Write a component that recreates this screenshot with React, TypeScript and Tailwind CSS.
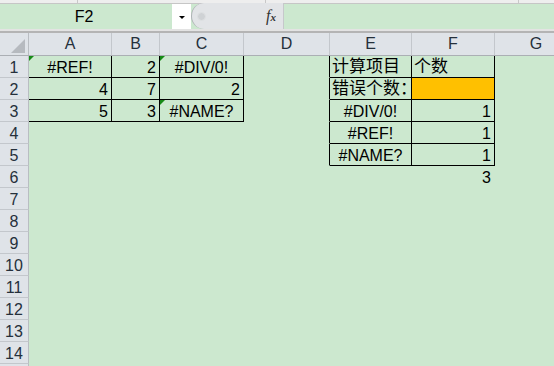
import React from "react";

type Align = "l" | "c" | "r";
type CellDef = { t?: string; a?: Align; tri?: boolean; cjk?: boolean; bg?: string; br?: boolean; bb?: boolean };

const widths = ["w-[83px]", "w-[48px]", "w-[84px]", "w-[86px]", "w-[82px]", "w-[83px]", "w-[83px]"];
const letters = ["A", "B", "C", "D", "E", "F", "G"];

const rows: CellDef[][] = [
  [
    { t: "#REF!", a: "c", tri: true, br: true, bb: true },
    { t: "2", a: "r", br: true, bb: true },
    { t: "#DIV/0!", a: "c", tri: true, br: true, bb: true },
    { br: true },
    { t: "计算项目", a: "l", cjk: true, br: true, bb: true },
    { t: "个数", a: "l", cjk: true, br: true, bb: true },
    {},
  ],
  [
    { t: "4", a: "r", br: true, bb: true },
    { t: "7", a: "r", br: true, bb: true },
    { t: "2", a: "r", br: true, bb: true },
    { br: true },
    { t: "错误个数：", a: "l", cjk: true, br: true, bb: true },
    { bg: "orange", br: true, bb: true },
    {},
  ],
  [
    { t: "5", a: "r", br: true, bb: true },
    { t: "3", a: "r", br: true, bb: true },
    { t: "#NAME?", a: "c", tri: true, br: true, bb: true },
    { br: true },
    { t: "#DIV/0!", a: "c", br: true, bb: true },
    { t: "1", a: "r", br: true, bb: true },
    {},
  ],
  [
    {}, {}, {}, { br: true },
    { t: "#REF!", a: "c", br: true, bb: true },
    { t: "1", a: "r", br: true, bb: true },
    {},
  ],
  [
    {}, {}, {}, { br: true },
    { t: "#NAME?", a: "c", br: true, bb: true },
    { t: "1", a: "r", br: true, bb: true },
    {},
  ],
  [{}, {}, {}, {}, {}, { t: "3", a: "r" }, {}],
];

function Cell({ c, w }: { c: CellDef; w: string }) {
  const just = c.a === "c" ? "justify-center" : c.a === "r" ? "justify-end pr-[3px]" : "justify-start pl-[2px]";
  const align = c.cjk ? "items-center leading-[21px] text-[17px]" : "items-end leading-[19px] text-[16px]";
  return (
    <div
      className={`relative flex shrink-0 h-[22px] box-border border-r border-b whitespace-nowrap overflow-visible ${w} ${just} ${align} ${
        c.br ? "border-r-black" : "border-r-transparent"
      } ${c.bb ? "border-b-black" : "border-b-transparent"} ${c.bg === "orange" ? "bg-[#ffc000]" : ""}`}
    >
      {c.tri && (
        <div className="absolute left-0 top-0 w-[5px] h-[5px] bg-[#178a17] [clip-path:polygon(0_0,100%_0,0_100%)]" />
      )}
      {c.t && <span>{c.t}</span>}
    </div>
  );
}

export default function App() {
  const allRows: CellDef[][] = [];
  for (let i = 0; i < 15; i++) allRows.push(rows[i] ?? [{}, {}, {}, {}, {}, {}, {}]);

  return (
    <div className="w-[554px] h-[366px] overflow-hidden bg-[#cce8cf] text-black font-['Liberation_Sans','Noto_Sans_CJK_SC',sans-serif]">
      {/* top band */}
      <div className="flex h-[4px] bg-[#eeeeee] border-b border-[#c6c6c6]">
        <div className="w-[78px] border-r border-[#c8c8c8]" />
        <div className="w-[188px] border-r border-[#c8c8c8]" />
        <div className="w-[253px] border-r border-[#c8c8c8]" />
      </div>
      {/* formula bar */}
      <div className="flex h-[25px]">
        <div className="w-[172px] flex items-center justify-center pr-[4px] text-[16px] leading-none pt-[1px]">F2</div>
        <div className="w-[19px] bg-white flex items-center justify-center">
          <div className="w-0 h-0 border-l-[3px] border-r-[3px] border-t-[3px] border-l-transparent border-r-transparent border-t-black mt-[2px]" />
        </div>
        <div className="relative w-[93px] -mt-[1px] h-[26px] bg-[#e2e4e7] border-l border-[#aeb1b5] border-r border-r-[#c6c8cb] rounded-l-[16px] flex items-center">
          <div className="ml-[5px] w-[9px] h-[9px] rounded-full bg-[#cfd2d5] border border-[#dfe1e3]" />
          <div className="ml-auto mr-[7px] font-['Liberation_Serif',serif] italic text-[16px] leading-none text-[#333]">
            f<span className="text-[11px] font-bold">x</span>
          </div>
        </div>
        <div className="flex-1" />
      </div>
      <div className="h-[2px] bg-[#e3e3e3]" />
      <div className="h-[2px] bg-[#b4b4b4]" />
      {/* header row */}
      <div className="flex h-[23px] bg-[#dfe3e8] border-b border-[#abafb4] text-[16px] text-[#25303b]">
        <div className="relative w-[29px] shrink-0 border-r border-[#b9bdc2]">
          <div className="absolute left-[11px] top-[6px] w-[14px] h-[14px] bg-[#b6babf] [clip-path:polygon(100%_0,100%_100%,0_100%)]" />
        </div>
        {letters.map((l, i) => (
          <div key={l} className={`${widths[i]} shrink-0 border-r border-[#c3c7cc] flex items-center justify-center leading-[22px]`}>
            {l}
          </div>
        ))}
      </div>
      {/* rows */}
      {allRows.map((r, ri) => (
        <div key={ri} className="flex h-[22px]">
          <div className="w-[29px] shrink-0 h-[22px] box-border bg-[#dfe3e8] border-r border-b border-r-[#b9bdc2] border-b-[#c3c7cc] flex items-end justify-center leading-[19px] text-[16px] text-[#25303b]">
            {ri < 14 ? ri + 1 : ""}
          </div>
          {r.map((c, ci) => (
            <Cell key={ci} c={c} w={widths[ci]} />
          ))}
        </div>
      ))}
    </div>
  );
}
